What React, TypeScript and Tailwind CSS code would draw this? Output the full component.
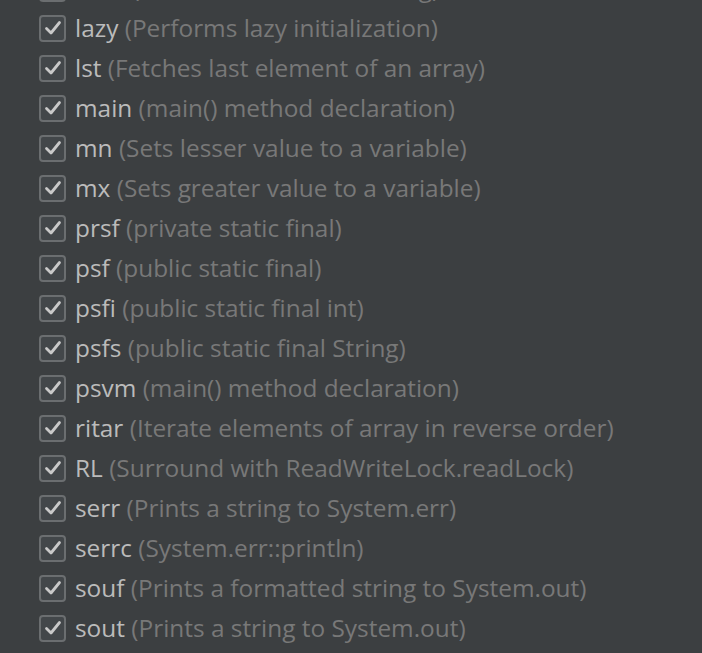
import React from 'react';

const templates: [string, string][] = [
    ['ittok', 'Iterate tokens from String'],
    ['lazy', 'Performs lazy initialization'],
    ['lst', 'Fetches last element of an array'],
    ['main', 'main() method declaration'],
    ['mn', 'Sets lesser value to a variable'],
    ['mx', 'Sets greater value to a variable'],
    ['prsf', 'private static final'],
    ['psf', 'public static final'],
    ['psfi', 'public static final int'],
    ['psfs', 'public static final String'],
    ['psvm', 'main() method declaration'],
    ['ritar', 'Iterate elements of array in reverse order'],
    ['RL', 'Surround with ReadWriteLock.readLock'],
    ['serr', 'Prints a string to System.err'],
    ['serrc', 'System.err::println'],
    ['souf', 'Prints a formatted string to System.out'],
    ['sout', 'Prints a string to System.out'],
];

function CheckBox() {
    return (
        <span className="flex h-[27px] w-[27px] shrink-0 items-center justify-center rounded-[4px] border-2 border-[#6b6e70] bg-[#43474a]">
            <svg width="18" height="16" viewBox="0 0 18 16" fill="none">
                <path d="M2.5 8.5 L7 13 L15.5 2.5" stroke="#c9c9c9" strokeWidth="2.8" strokeLinecap="round" strokeLinejoin="round" />
            </svg>
        </span>
    );
}

export default function App() {
    return (
        <div className="h-[653px] w-[702px] overflow-hidden bg-[#3c3f41]" style={{ fontFamily: '"Open Sans", "Noto Sans", sans-serif' }}>
            <ul className="-mt-[32px] flex flex-col pl-[39px]">
                {templates.map(([name, desc]) => (
                    <li key={name} className="flex h-[40px] items-center gap-[9px] whitespace-nowrap">
                        <CheckBox />
                        <span className="text-[24.4px] leading-none">
                            <span className="text-[#bbbbbb]">{name}</span>{' '}
                            <span className="text-[#787878]">({desc})</span>
                        </span>
                    </li>
                ))}
            </ul>
        </div>
    );
}
